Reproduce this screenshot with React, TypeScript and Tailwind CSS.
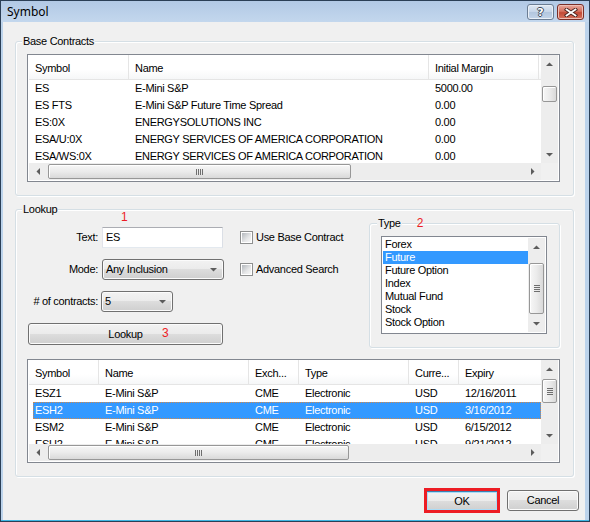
import React from "react";

const btnBg =
  "bg-[linear-gradient(#f2f2f2_0%,#ebebeb_50%,#dddddd_50%,#cfcfcf_100%)]";

function Tri({ dir }: { dir: "up" | "down" | "left" | "right" }) {
  if (dir === "up")
    return (
      <svg width="7" height="4" viewBox="0 0 7 4">
        <polygon points="0,4 3.5,0.5 7,4" fill="#5c5c5c" />
      </svg>
    );
  if (dir === "down")
    return (
      <svg width="7" height="4" viewBox="0 0 7 4">
        <polygon points="0,0 3.5,3.5 7,0" fill="#5c5c5c" />
      </svg>
    );
  if (dir === "left")
    return (
      <svg width="4" height="7" viewBox="0 0 4 7">
        <polygon points="4,0 0.5,3.5 4,7" fill="#5c5c5c" />
      </svg>
    );
  return (
    <svg width="4" height="7" viewBox="0 0 4 7">
      <polygon points="0,0 3.5,3.5 0,7" fill="#5c5c5c" />
    </svg>
  );
}

function GripLinesH() {
  return (
    <div className="flex flex-col gap-[1px]">
      <div className="w-[6px] h-[1px] bg-[#6e6e6e]" />
      <div className="w-[6px] h-[1px] bg-[#6e6e6e]" />
      <div className="w-[6px] h-[1px] bg-[#6e6e6e]" />
      <div className="w-[6px] h-[1px] bg-[#6e6e6e]" />
    </div>
  );
}

function GripLinesV() {
  return (
    <div className="flex flex-row gap-[1px]">
      <div className="w-[1px] h-[6px] bg-[#6e6e6e]" />
      <div className="w-[1px] h-[6px] bg-[#6e6e6e]" />
      <div className="w-[1px] h-[6px] bg-[#6e6e6e]" />
      <div className="w-[1px] h-[6px] bg-[#6e6e6e]" />
    </div>
  );
}

function VScroll({ thumb, grip }: { thumb: string; grip?: boolean }) {
  return (
    <div className="w-[17px] h-full flex flex-col bg-[#ededed]">
      <div className="h-[17px] shrink-0 flex items-center justify-center">
        <Tri dir="up" />
      </div>
      <div className="flex-1 px-[1px] overflow-hidden">
        <div
          className={
            thumb +
            " rounded-[2px] border border-[#979797] bg-[linear-gradient(90deg,#f7f7f7,#ebebeb_50%,#d9d9d9)] shadow-[inset_1px_1px_0_#ffffff] flex items-center justify-center"
          }
        >
          {grip && <GripLinesH />}
        </div>
      </div>
      <div className="h-[17px] shrink-0 flex items-center justify-center">
        <Tri dir="down" />
      </div>
    </div>
  );
}

function HScroll({ thumb }: { thumb: string }) {
  return (
    <div className="h-[17px] w-full flex flex-row bg-[#ededed]">
      <div className="w-[17px] shrink-0 flex items-center justify-center">
        <Tri dir="left" />
      </div>
      <div className="flex-1 py-[1px] overflow-hidden">
        <div
          className={
            thumb +
            " h-full rounded-[2px] border border-[#979797] bg-[linear-gradient(#f7f7f7,#ebebeb_50%,#d9d9d9)] shadow-[inset_1px_1px_0_#ffffff] flex items-center justify-center"
          }
        >
          <GripLinesV />
        </div>
      </div>
      <div className="w-[17px] shrink-0 flex items-center justify-center">
        <Tri dir="right" />
      </div>
    </div>
  );
}

type Col = { label: string; w: string; rw: string };

function ListView({
  cols,
  rows,
  selected,
  size,
  vthumb,
  vgrip,
  hthumb,
}: {
  cols: Col[];
  rows: string[][];
  selected: number;
  size: string;
  vthumb: string;
  vgrip?: boolean;
  hthumb: string;
}) {
  return (
    <div
      className={
        size +
        " border border-[#828790] bg-white px-[1px] pb-[1px] grid grid-cols-[1fr_17px] grid-rows-[1fr_17px]"
      }
    >
      <div className="overflow-hidden flex flex-col min-w-0">
        <div className="h-[25px] shrink-0 flex border-b border-[#e5e5e5] bg-[linear-gradient(#ffffff,#ffffff_60%,#f6f7f8)]">
          {cols.map((c, i) => (
            <div
              key={i}
              className={
                c.w +
                " shrink-0 h-full border-r border-[#e5e5e5] pl-[6px] pt-[2px] flex items-center whitespace-nowrap overflow-hidden"
              }
            >
              {c.label}
            </div>
          ))}
        </div>
        {rows.map((r, ri) => (
          <div
            key={ri}
            className={
              "h-[17px] shrink-0 flex items-center ml-[4px] " +
              (ri === selected
                ? "bg-[#3399ff] text-white outline-1 outline-dotted outline-[#d0884a] -outline-offset-1"
                : "")
            }
          >
            {cols.map((c, i) => (
              <div
                key={i}
                className={
                  (i === 0 ? c.rw + " pl-[2px]" : c.w + " pl-[6px]") +
                  " shrink-0 whitespace-nowrap overflow-hidden"
                }
              >
                {r[i]}
              </div>
            ))}
          </div>
        ))}
      </div>
      <VScroll thumb={vthumb} grip={vgrip} />
      <HScroll thumb={hthumb} />
      <div className="bg-[#f0f0f0]" />
    </div>
  );
}

function Checkbox({ label }: { label: string }) {
  return (
    <div className="flex items-center">
      <div className="w-[13px] h-[13px] border border-[#8e8f8f] bg-white p-[1px]">
        <div className="w-full h-full bg-[linear-gradient(135deg,#b4b8bd,#e6e7e8_60%,#f7f7f7)]" />
      </div>
      <span className="ml-[3px]">{label}</span>
    </div>
  );
}

function Combo({ value, size }: { value: string; size: string }) {
  return (
    <div
      className={
        size +
        " rounded-[3px] border border-[#707070] shadow-[inset_0_0_0_1px_#fbfbfb] " +
        btnBg +
        " flex items-center pl-[3px] pr-[6px]"
      }
    >
      <span className="flex-1">{value}</span>
      <Tri dir="down" />
    </div>
  );
}

function GroupLegend({ children }: { children: React.ReactNode }) {
  return (
    <div className="-mt-[7px] -mb-[6px] ml-[6px] px-[1px] w-fit h-[13px] leading-[13px] bg-[#f0f0f0]">
      {children}
    </div>
  );
}

const baseCols: Col[] = [
  { label: "Symbol", w: "w-[100px]", rw: "w-[96px]" },
  { label: "Name", w: "w-[300px]", rw: "w-[296px]" },
  { label: "Initial Margin", w: "w-[110px]", rw: "w-[106px]" },
];

const baseRows = [
  ["ES", "E-Mini S&P", "5000.00"],
  ["ES FTS", "E-Mini S&P Future Time Spread", "0.00"],
  ["ES:0X", "ENERGYSOLUTIONS INC", "0.00"],
  ["ESA/U:0X", "ENERGY SERVICES OF AMERICA CORPORATION", "0.00"],
  ["ESA/WS:0X", "ENERGY SERVICES OF AMERICA CORPORATION", "0.00"],
];

const lookCols: Col[] = [
  { label: "Symbol", w: "w-[70px]", rw: "w-[66px]" },
  { label: "Name", w: "w-[150px]", rw: "w-[146px]" },
  { label: "Exch...", w: "w-[50px]", rw: "w-[46px]" },
  { label: "Type", w: "w-[110px]", rw: "w-[106px]" },
  { label: "Curre...", w: "w-[50px]", rw: "w-[46px]" },
  { label: "Expiry", w: "w-[100px]", rw: "w-[96px]" },
];

const lookRows = [
  ["ESZ1", "E-Mini S&P", "CME", "Electronic", "USD", "12/16/2011"],
  ["ESH2", "E-Mini S&P", "CME", "Electronic", "USD", "3/16/2012"],
  ["ESM2", "E-Mini S&P", "CME", "Electronic", "USD", "6/15/2012"],
  ["ESU2", "E-Mini S&P", "CME", "Electronic", "USD", "9/21/2012"],
];

const types = [
  "Forex",
  "Future",
  "Future Option",
  "Index",
  "Mutual Fund",
  "Stock",
  "Stock Option",
];

export default function App() {
  return (
    <div className="w-[590px] h-[522px] flex flex-col bg-[#bcd3eb] border border-[#2b3f56] font-['Liberation_Sans',Arial,sans-serif] text-[11px] leading-[13px] tracking-[-0.3px] text-black select-none overflow-hidden">
      {/* Title bar */}
      <div className="h-[21px] shrink-0 flex items-start bg-[linear-gradient(#b2c9e5,#c3d7ed)]">
        <span className="ml-[6px] mt-[3px] text-[12px] leading-[15px] tracking-normal font-['Noto_Sans',sans-serif]">
          Symbol
        </span>
        <div className="ml-auto mt-[3px] mr-[5px] flex gap-[3px]">
          <div className="w-[27px] h-[16px] rounded-[3px] border border-[#6b7d93] bg-[linear-gradient(#dfe8f3,#c5d5e8_50%,#b2c6de_50%,#c3d4e8)] shadow-[inset_0_0_0_1px_#e9f0f8] flex items-center justify-center">
            <span className="text-white font-bold text-[11px] leading-[11px] tracking-normal font-['DejaVu_Sans',sans-serif] [text-shadow:1px_0_#3d4a5a,-1px_0_#3d4a5a,0_1px_#3d4a5a,0_-1px_#3d4a5a]">
              ?
            </span>
          </div>
          <div className="w-[27px] h-[16px] rounded-[3px] border border-[#7a2f28] bg-[linear-gradient(#e8a99d,#d5715f_45%,#c24a36_55%,#d6735f)] shadow-[inset_0_0_0_1px_#eec0b6] flex items-center justify-center">
            <svg width="14" height="9" viewBox="0 0 14 9">
              <path d="M2.5 1.5 L11.5 7.5 M11.5 1.5 L2.5 7.5" stroke="#4a2520" strokeWidth="3.6" strokeLinecap="square" />
              <path d="M2.5 1.5 L11.5 7.5 M11.5 1.5 L2.5 7.5" stroke="#ffffff" strokeWidth="1.8" strokeLinecap="square" />
            </svg>
          </div>
        </div>
      </div>

      {/* Client area */}
      <div className="flex-1 ml-[2px] mr-[4px] bg-[#f0f0f0] flex flex-col pl-[12px]">
        {/* Base Contracts */}
        <div className="mt-[19px] w-[559px] h-[155px] shrink-0 rounded-[3px] border border-[#d5dfe5] shadow-[inset_1px_1px_0_#ffffff,1px_1px_0_#ffffff]">
          <GroupLegend>Base Contracts</GroupLegend>
          <div className="mt-[12px] ml-[11px]">
            <ListView
              cols={baseCols}
              rows={baseRows}
              selected={-1}
              size="w-[533px] h-[128px]"
              vthumb="mt-[14px] h-[16px]"
              hthumb="ml-[2px] w-[303px]"
            />
          </div>
        </div>

        {/* Lookup */}
        <div className="mt-[13px] w-[559px] h-[268px] shrink-0 rounded-[3px] border border-[#d5dfe5] shadow-[inset_1px_1px_0_#ffffff,1px_1px_0_#ffffff]">
          <GroupLegend>Lookup</GroupLegend>
          <div className="flex items-start">
            {/* left form */}
            <div className="flex flex-col">
              <div className="h-[13px] mt-[1px] ml-[105px] text-[12px] leading-[13px] text-[#ed1c24] tracking-normal">
                1
              </div>
              <div className="mt-[3px] h-[21px] flex items-center">
                <div className="w-[82px] text-right">Text:</div>
                <div className="ml-[4px] w-[121px] h-[21px] bg-white border border-[#abadb3] border-l-[#e2e3ea] border-r-[#dbdfe6] border-b-[#e3e9ef] flex items-center pl-[3px]">
                  ES
                </div>
                <div className="ml-[17px]">
                  <Checkbox label="Use Base Contract" />
                </div>
              </div>
              <div className="mt-[11px] h-[21px] flex items-center">
                <div className="w-[82px] text-right">Mode:</div>
                <div className="ml-[4px]">
                  <Combo value="Any Inclusion" size="w-[122px] h-[21px]" />
                </div>
                <div className="ml-[16px]">
                  <Checkbox label="Advanced Search" />
                </div>
              </div>
              <div className="mt-[11px] h-[21px] flex items-center">
                <div className="w-[82px] text-right"># of contracts:</div>
                <div className="ml-[3px]">
                  <Combo value="5" size="w-[72px] h-[21px]" />
                </div>
              </div>
              <div
                className={
                  "relative mt-[11px] ml-[12px] w-[195px] h-[22px] rounded-[3px] border border-[#707070] shadow-[inset_0_0_0_1px_#fbfbfb] " +
                  btnBg +
                  " flex items-center justify-center"
                }
              >
                Lookup
                <span className="absolute left-[133px] top-[3px] text-[12px] leading-[13px] text-[#ed1c24] tracking-normal">
                  3
                </span>
              </div>
            </div>

            {/* Type group */}
            <div className="ml-auto mr-[13px] mt-[13px] w-[191px] h-[125px] rounded-[3px] border border-[#d5dfe5] shadow-[inset_1px_1px_0_#ffffff,1px_1px_0_#ffffff]">
              <div className="-mt-[7px] -mb-[6px] h-[13px] flex items-center">
                <div className="ml-[7px] px-[1px] h-[13px] leading-[13px] bg-[#f0f0f0]">Type</div>
                <div className="ml-[15px] text-[12px] leading-[13px] text-[#ed1c24] tracking-normal">2</div>
              </div>
              <div className="mt-[12px] ml-[11px] w-[166px] h-[98px] border border-[#828790] bg-white p-[1px] flex">
                <div className="flex-1 flex flex-col min-w-0">
                  {types.map((t, i) => (
                    <div
                      key={t}
                      className={
                        "h-[13px] leading-[13px] pl-[2px] whitespace-nowrap " +
                        (i === 1 ? "bg-[#3399ff] text-white" : "")
                      }
                    >
                      {t}
                    </div>
                  ))}
                </div>
                <VScroll thumb="mt-[8px] h-[51px]" grip />
              </div>
            </div>
          </div>

          <div className="mt-[11px] ml-[11px]">
            <ListView
              cols={lookCols}
              rows={lookRows}
              selected={1}
              size="w-[533px] h-[104px]"
              vthumb="mt-[2px] h-[24px]"
              vgrip
              hthumb="ml-[2px] w-[301px]"
            />
          </div>
        </div>

        {/* Buttons */}
        <div className="mt-[11px] mr-[6px] flex items-center justify-end">
          <div className="w-[76px] h-[25px] border-[3px] border-[#ed1c24]">
            <div
              className={
                "w-full h-full border-t border-[#3c7fb1] shadow-[inset_0_0_0_1px_#a9dcf7] " +
                btnBg +
                " flex items-center justify-center"
              }
            >
              OK
            </div>
          </div>
          <div
            className={
              "ml-[7px] w-[72px] h-[21px] rounded-[3px] border border-[#707070] shadow-[inset_0_0_0_1px_#fbfbfb] " +
              btnBg +
              " flex items-center justify-center"
            }
          >
            Cancel
          </div>
        </div>
      </div>
      <div className="h-[1px] shrink-0 bg-[#3fb6e3]" />
    </div>
  );
}
